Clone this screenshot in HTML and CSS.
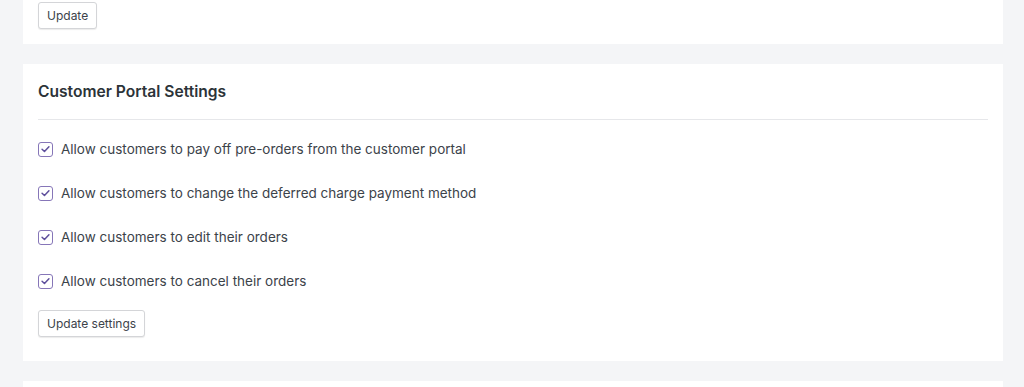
FILE: index.html
```html
<!DOCTYPE html>
<html>
<head>
<meta charset="utf-8">
<link rel="stylesheet" href="styles.css">
</head>
<body>
<div class="page">
  <section class="card card-top">
    <button class="btn">Update</button>
  </section>
  <section class="card card-main">
    <h2 class="title">Customer Portal Settings</h2>
    <div class="divider"></div>
    <ul class="options">
      <li class="option"><span class="check"><svg viewBox="0 0 14 14" width="14" height="14"><path d="M3.3 7.2 L5.9 9.7 L10.7 4.5" fill="none" stroke="#5e4f9c" stroke-width="1.6" stroke-linecap="round" stroke-linejoin="round"/></svg></span><span class="label">Allow customers to pay off pre-orders from the customer portal</span></li>
      <li class="option"><span class="check"><svg viewBox="0 0 14 14" width="14" height="14"><path d="M3.3 7.2 L5.9 9.7 L10.7 4.5" fill="none" stroke="#5e4f9c" stroke-width="1.6" stroke-linecap="round" stroke-linejoin="round"/></svg></span><span class="label">Allow customers to change the deferred charge payment method</span></li>
      <li class="option"><span class="check"><svg viewBox="0 0 14 14" width="14" height="14"><path d="M3.3 7.2 L5.9 9.7 L10.7 4.5" fill="none" stroke="#5e4f9c" stroke-width="1.6" stroke-linecap="round" stroke-linejoin="round"/></svg></span><span class="label">Allow customers to edit their orders</span></li>
      <li class="option"><span class="check"><svg viewBox="0 0 14 14" width="14" height="14"><path d="M3.3 7.2 L5.9 9.7 L10.7 4.5" fill="none" stroke="#5e4f9c" stroke-width="1.6" stroke-linecap="round" stroke-linejoin="round"/></svg></span><span class="label">Allow customers to cancel their orders</span></li>
    </ul>
    <button class="btn">Update settings</button>
  </section>
  <section class="card card-bottom"></section>
</div>
</body>
</html>
```
FILE: styles.css
```css
* { box-sizing: border-box; }
html, body { margin: 0; padding: 0; }
html, body { height: 387px; overflow: hidden; }
body {
  background: #f4f5f7;
  font-family: Inter, "Noto Sans", "Liberation Sans", sans-serif;
  color: #3c434a;
}
.page {
  display: flex;
  flex-direction: column;
  gap: 20px;
  padding: 0 21px 0 23px;
}
.card {
  background: #ffffff;
  padding: 0 15px;
}
.card-top {
  height: 44px;
  padding-top: 2px;
}
.card-main {
  height: 297px;
  display: flex;
  flex-direction: column;
  align-items: flex-start;
  padding-top: 18px;
}
.card-bottom { height: 6px; }
.title {
  margin: 0;
  font-size: 15.6px;
  font-weight: 600;
  color: #2c3338;
  line-height: 20px;
}
.divider {
  align-self: stretch;
  height: 1px;
  background: #e6e7ea;
  margin-top: 17px;
}
.options {
  list-style: none;
  margin: 0;
  padding: 0;
  margin-top: 18px;
  display: flex;
  flex-direction: column;
  gap: 22px;
}
.option {
  display: flex;
  align-items: center;
  height: 22px;
  font-size: 13.5px;
  line-height: 22px;
  color: #3c434a;
}
.check {
  width: 15px;
  height: 15px;
  border: 1.5px solid #8676b8;
  border-radius: 3px;
  margin-right: 8px;
  display: flex;
  align-items: center;
  justify-content: center;
  background: #fff;
}
.check svg { display: block; }
.btn {
  font-family: inherit;
  font-size: 12px;
  color: #3c434a;
  background: #fff;
  border: 1px solid #d4d5d8;
  border-radius: 3px;
  box-shadow: 0 1px 1px rgba(0,0,0,0.08);
  height: 27px;
  padding: 0 8px;
  cursor: pointer;
}
.card-main .btn { margin-top: 18px; }
```
